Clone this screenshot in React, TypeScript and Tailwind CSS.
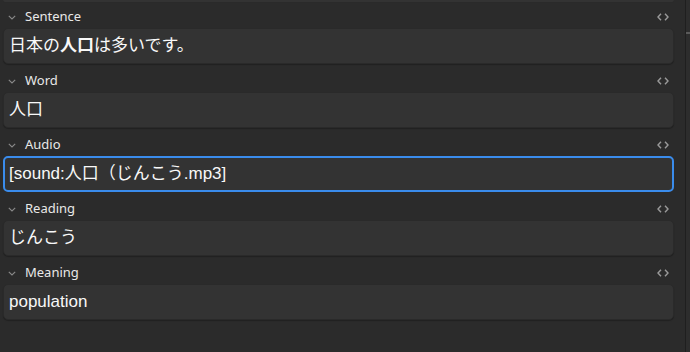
import React from "react";

const Chevron = () => (
  <svg width="8" height="5" viewBox="0 0 8 5" className="shrink-0">
    <path d="M0.8 0.8 L4 4 L7.2 0.8" fill="none" stroke="#8a8a8a" strokeWidth="1.1" />
  </svg>
);

const Code = () => (
  <svg width="12" height="8" viewBox="0 0 12 8" className="shrink-0">
    <path d="M4 0.8 L1 4 L4 7.2 M8 0.8 L11 4 L8 7.2" fill="none" stroke="#9a9a9a" strokeWidth="1.4" />
  </svg>
);

type FieldProps = {
  label: string;
  children: React.ReactNode;
  focused?: boolean;
  first?: boolean;
};

const Field = ({ label, children, focused, first }: FieldProps) => (
  <div className="flex flex-col">
    <div
      className={`flex items-end pb-[2px] ${first ? "h-[25px]" : "h-[28px]"}`}
    >
      <div className="flex items-center h-[20px] w-full">
        <div className="w-[25px] flex justify-end pr-[9px] pt-[2px]">
          <Chevron />
        </div>
        <span className="text-[13px] text-[#e8e8e8] leading-[20px]">{label}</span>
        <div className="ml-auto mr-[16px] pt-[1px] flex items-center">
          <Code />
        </div>
      </div>
    </div>
    <div
      className={`ml-[3px] mr-[11px] h-[36px] rounded-[5px] bg-[#333333] flex items-center text-[17px] text-[#f8f8f8] ${
        focused
          ? "border-2 border-[#3a8cec] pl-[4px]"
          : "border border-[#2a2a2a] shadow-[0_1px_1px_rgba(0,0,0,0.25)] pl-[5px]"
      }`}
      style={{ fontFamily: '"Liberation Sans", "Noto Sans CJK JP", sans-serif' }}
    >
      {children}
    </div>
  </div>
);

export default function App() {
  return (
    <div
      className="w-[690px] h-[352px] bg-[#2b2b2b] flex overflow-hidden"
      style={{ fontFamily: '"Noto Sans", "Noto Sans CJK JP", sans-serif' }}
    >
      <div className="flex-1 flex flex-col">
        <div className="ml-[3px] mr-[11px] h-[3px] rounded-b-[5px] bg-[#333333] border-b border-[#2a2a2a]" />
        <Field label="Sentence" first>
          <span>
            日本の<b>人口</b>は多いです。
          </span>
        </Field>
        <Field label="Word">
          <span>人口</span>
        </Field>
        <Field label="Audio" focused>
          <span>[sound:人口（じんこう.mp3]</span>
        </Field>
        <Field label="Reading">
          <span>じんこう</span>
        </Field>
        <Field label="Meaning">
          <span>population</span>
        </Field>
      </div>
      <div className="w-[5px] border-l border-[#1f1f1f] bg-[#2d2d2d] flex flex-col">
        <div className="h-[32px]" />
        <div className="h-[2px] bg-[#5a5a5a]" />
      </div>
    </div>
  );
}
